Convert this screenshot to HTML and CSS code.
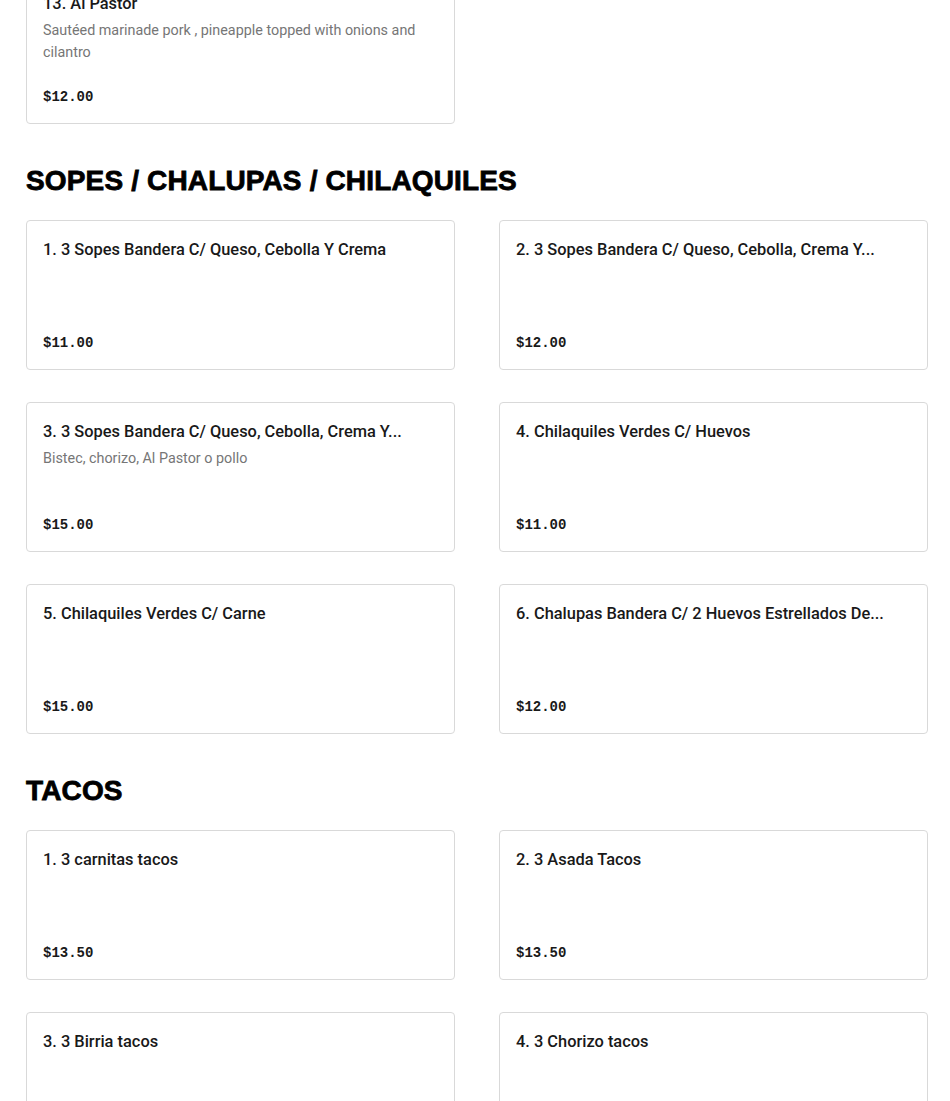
FILE: index.html
```html
<!DOCTYPE html>
<html>
<head>
<meta charset="utf-8">
<link rel="stylesheet" href="styles.css">
</head>
<body>
<main class="menu">
  <div class="grid first">
    <div class="card">
      <div class="title">13. Al Pastor</div>
      <div class="desc">Sautéed marinade pork , pineapple topped with onions and cilantro</div>
      <div class="price">$12.00</div>
    </div>
  </div>

  <section class="section">
    <h2 class="heading">SOPES / CHALUPAS / CHILAQUILES</h2>
    <div class="grid">
      <div class="card">
        <div class="title">1. 3 Sopes Bandera C/ Queso, Cebolla Y Crema</div>
        <div class="price">$11.00</div>
      </div>
      <div class="card">
        <div class="title">2. 3 Sopes Bandera C/ Queso, Cebolla, Crema Y...</div>
        <div class="price">$12.00</div>
      </div>
      <div class="card">
        <div class="title">3. 3 Sopes Bandera C/ Queso, Cebolla, Crema Y...</div>
        <div class="desc">Bistec, chorizo, Al Pastor o pollo</div>
        <div class="price">$15.00</div>
      </div>
      <div class="card">
        <div class="title">4. Chilaquiles Verdes C/ Huevos</div>
        <div class="price">$11.00</div>
      </div>
      <div class="card">
        <div class="title">5. Chilaquiles Verdes C/ Carne</div>
        <div class="price">$15.00</div>
      </div>
      <div class="card">
        <div class="title">6. Chalupas Bandera C/ 2 Huevos Estrellados De...</div>
        <div class="price">$12.00</div>
      </div>
    </div>
  </section>

  <section class="section">
    <h2 class="heading">TACOS</h2>
    <div class="grid">
      <div class="card">
        <div class="title">1. 3 carnitas tacos</div>
        <div class="price">$13.50</div>
      </div>
      <div class="card">
        <div class="title">2. 3 Asada Tacos</div>
        <div class="price">$13.50</div>
      </div>
      <div class="card">
        <div class="title">3. 3 Birria tacos</div>
        <div class="price">$13.50</div>
      </div>
      <div class="card">
        <div class="title">4. 3 Chorizo tacos</div>
        <div class="price">$13.50</div>
      </div>
    </div>
  </section>
</main>
</body>
</html>
```

FILE: styles.css
```css
html, body {
  margin: 0;
  padding: 0;
  background: #ffffff;
}
body {
  font-family: Roboto, "Liberation Sans", sans-serif;
  color: #191919;
  overflow: hidden;
}
.menu {
  padding: 0 22px 0 26px;
  margin-top: -26px;
}
.grid {
  display: grid;
  grid-template-columns: 429px 429px;
  column-gap: 44px;
  row-gap: 32px;
}
.card {
  box-sizing: border-box;
  min-height: 150px;
  border: 1px solid #d9d9d9;
  border-radius: 4px;
  padding: 17px 16px 14px 16px;
  display: flex;
  flex-direction: column;
  background: #fff;
}
.title {
  font-size: 16.4px;
  line-height: 24px;
  font-weight: 500;
  color: #191919;
  white-space: nowrap;
  overflow: hidden;
}
.desc {
  margin-top: 4px;
  font-size: 14.35px;
  line-height: 22px;
  color: #767676;
}
.price {
  margin-top: auto;
  padding-top: 16px;
  font-family: "Liberation Mono", monospace;
  font-weight: 700;
  font-size: 14px;
  line-height: 24px;
  color: #191919;
}
.section {
  margin-top: 39px;
}
.heading {
  margin: 0 0 21px 0;
  font-family: "Liberation Sans", Arial, sans-serif;
  font-weight: 700;
  font-size: 28px;
  line-height: 36px;
  letter-spacing: 0.15px;
  color: #000;
  -webkit-text-stroke: 0.8px #000;
}
```
